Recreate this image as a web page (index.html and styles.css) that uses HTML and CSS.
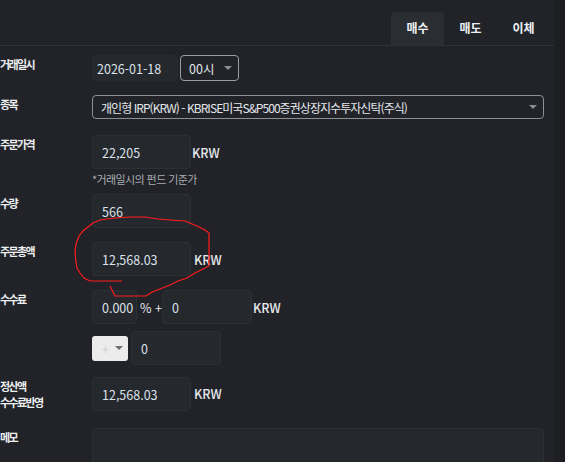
FILE: index.html
```html
<!DOCTYPE html>
<html lang="ko">
<head>
    <meta charset="UTF-8">
    <title>주문</title>
    <link rel="stylesheet" href="styles.css">
</head>
<body>
    <div class="page">
        <div class="main">
            <div class="tabs">
                <div class="tab active">매수</div>
                <div class="tab">매도</div>
                <div class="tab">이체</div>
            </div>

            <div class="form">
                <div class="row row-date">
                    <div class="label">거래일시</div>
                    <div class="field">
                        <div class="input date-input">2026-01-18</div>
                        <div class="select time-select">00시<span class="caret"></span></div>
                    </div>
                </div>

                <div class="row row-fund">
                    <div class="label">종목</div>
                    <div class="field">
                        <div class="select fund-select">개인형 IRP(KRW) - KBRISE미국S&amp;P500증권상장지수투자신탁(주식)<span class="caret"></span></div>
                    </div>
                </div>

                <div class="row row-price">
                    <div class="label">주문가격</div>
                    <div class="field column">
                        <div class="inline">
                            <div class="input box">22,205</div>
                            <span class="unit">KRW</span>
                        </div>
                        <div class="hint">*거래일시의 펀드 기준가</div>
                    </div>
                </div>

                <div class="row row-qty">
                    <div class="label">수량</div>
                    <div class="field">
                        <div class="input box">566</div>
                    </div>
                </div>

                <div class="row row-total">
                    <div class="label">주문총액</div>
                    <div class="field">
                        <div class="input box">12,568.03</div>
                        <span class="unit">KRW</span>
                    </div>
                </div>

                <div class="row row-fee">
                    <div class="label">수수료</div>
                    <div class="field column">
                        <div class="inline">
                            <div class="input box rate">0.000</div>
                            <span class="op">% +</span>
                            <div class="input box fixed">0</div>
                            <span class="unit">KRW</span>
                        </div>
                        <div class="inline sign-row">
                            <div class="sign-select"><span class="plus">+</span><span class="caret dark"></span></div>
                            <div class="input box extra">0</div>
                        </div>
                    </div>
                </div>

                <div class="row row-settle">
                    <div class="label">정산액<br>수수료반영</div>
                    <div class="field">
                        <div class="input box">12,568.03</div>
                        <span class="unit">KRW</span>
                    </div>
                </div>

                <div class="row row-memo">
                    <div class="label">메모</div>
                    <div class="field">
                        <div class="memo"></div>
                    </div>
                </div>
            </div>

            <svg class="scribble" width="565" height="462" viewBox="0 0 565 462">
                <polyline points="122,281 90,281 84,278 80,273 77,268 76,262 75,252 76,244 79,236 83,231 88,227 93,223 100,220 107,219 115,218 130,217 145,217 158,219 170,220 185,221 197,226 205,230 209,233 209,266 203,269 195,273 187,278 178,281 170,285 160,289 152,292 146,296 115,296 112,290 110,286" />
            </svg>
        </div>
        <div class="scrollbar"></div>
    </div>
</body>
</html>
```

FILE: styles.css
```css
* {
    margin: 0;
    padding: 0;
    box-sizing: border-box;
}

body {
    background-color: #212328;
    color: #e4e6e9;
    font-family: "Noto Sans CJK KR", "Noto Sans", sans-serif;
    font-size: 12px;
    overflow: hidden;
}

.page {
    display: flex;
    height: 462px;
}

.main {
    position: relative;
    width: 554px;
    height: 462px;
    overflow: hidden;
}

.scrollbar {
    width: 11px;
    background-color: #1b1d21;
    border-left: 6px solid #1d1f23;
}

.tabs {
    display: flex;
    justify-content: flex-end;
    height: 46px;
    padding: 12px 4px 0 0;
    border-bottom: 1px solid #2f3237;
}

.tab {
    width: 53px;
    height: 33px;
    display: flex;
    justify-content: center;
    align-items: center;
    padding-bottom: 2px;
    font-size: 12px;
    font-weight: bold;
    color: #eef0f3;
}

.tab.active {
    background-color: #2a2d32;
    border-radius: 4px 4px 0 0;
}

.form {
    padding-top: 9px;
}

.row {
    display: flex;
}

.label {
    width: 92px;
    flex-shrink: 0;
    font-size: 11px;
    line-height: 16px;
    letter-spacing: -1.6px;
    font-weight: bold;
    color: #eceef0;
    padding-top: 1px;
}

.field {
    display: flex;
    align-items: center;
    gap: 2px;
}

.field.column {
    flex-direction: column;
    align-items: flex-start;
}

.inline {
    display: flex;
    align-items: center;
}

.input {
    background-color: #25282d;
    border: 1px solid #2c2f34;
    border-radius: 4px;
    color: #dde3ea;
    font-size: 12.5px;
    display: flex;
    align-items: center;
    padding-left: 9px;
}

.date-input {
    width: 86px;
    height: 26px;
    padding-left: 4px;
    border-color: #26292e;
}

.select {
    position: relative;
    display: flex;
    align-items: center;
    height: 26px;
    border: 1px solid #9a9ea4;
    border-radius: 4px;
    padding-left: 8px;
    color: #e4e8ec;
    font-size: 12.5px;
}

.time-select {
    width: 59px;
}

.fund-select {
    width: 452px;
    height: 24px;
    border-color: #8c9095;
    white-space: nowrap;
    font-size: 12px;
    letter-spacing: -0.95px;
}

.caret {
    position: absolute;
    right: 6px;
    top: 50%;
    margin-top: -2px;
    border-left: 4px solid transparent;
    border-right: 4px solid transparent;
    border-top: 4px solid #8a8d92;
}

.caret.dark {
    position: static;
    margin: 0 0 0 6px;
    border-top-color: #6b6e72;
}

.box {
    width: 99px;
    height: 34px;
}

.unit {
    font-size: 12.5px;
    font-weight: 500;
    color: #e6e9ec;
    margin-left: 1px;
}

.hint {
    margin-top: 1px;
    font-size: 11px;
    line-height: 14px;
    color: #a9adb3;
    letter-spacing: -0.6px;
}

.row-date {
    margin-bottom: 14px;
}

.row-fund {
    margin-bottom: 16px;
}

.row-price {
    margin-bottom: 8px;
}

.row-qty {
    margin-bottom: 14px;
}

.row-total {
    margin-bottom: 14px;
}

.row-fee {
    margin-bottom: 12px;
}

.rate {
    width: 45px;
}

.op {
    width: 25px;
    padding-left: 3px;
    font-size: 12.5px;
    color: #e6e9ec;
}

.fixed {
    width: 90px;
}

.sign-row {
    margin-top: 5px;
    gap: 3px;
}

.sign-select {
    width: 36px;
    height: 25px;
    background-color: #ececec;
    border-radius: 3px;
    display: flex;
    align-items: center;
    padding-left: 10px;
}

.plus {
    color: #c9cbcd;
    font-size: 12px;
}

.extra {
    width: 90px;
}

.row-settle {
    margin-bottom: 17px;
}

.row-settle .field {
    align-items: flex-start;
}

.row-settle .unit {
    line-height: 34px;
}

.memo {
    width: 452px;
    height: 60px;
    background-color: #25282d;
    border: 1px solid #2c2f34;
    border-radius: 4px;
}

.scribble {
    position: absolute;
    left: 0;
    top: 0;
    pointer-events: none;
}

.scribble polyline {
    fill: none;
    stroke: #ff1c1c;
    stroke-width: 1.2;
}
```
